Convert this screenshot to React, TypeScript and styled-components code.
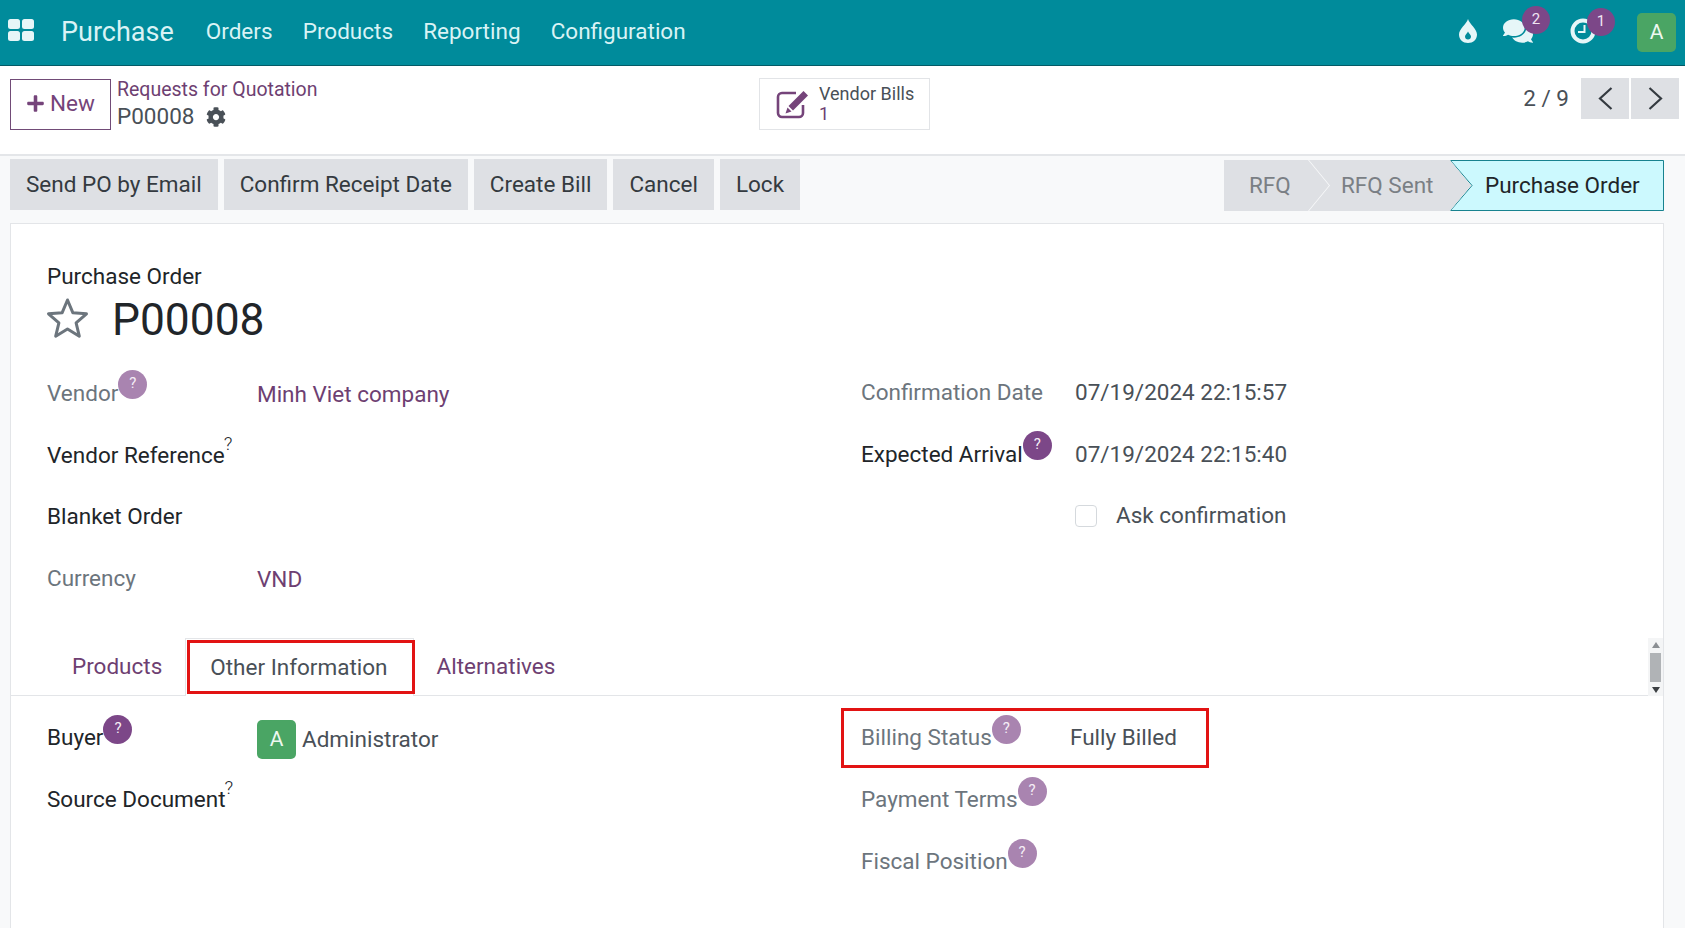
import React from 'react';
import styled, { createGlobalStyle } from 'styled-components';
import { FaCog, FaPlus, FaComments } from 'react-icons/fa';

const GlobalStyle = createGlobalStyle`
  html, body { margin: 0; padding: 0; height: 100%; overflow: hidden; }
  body {
    background: #f8f9fa;
    color: #212529;
    font-family: Roboto, "Liberation Sans", sans-serif;
    font-size: 22.5px;
    line-height: 33px;
  }
  * { box-sizing: border-box; }
`;

const Page = styled.div`
  width: 1685px;
  height: 928px;
  display: flex;
  flex-direction: column;
  overflow: hidden;
`;

const NavBar = styled.header`
  flex: none;
  height: 66px;
  display: flex;
  align-items: center;
  background: #008b9b;
  border-bottom: 1px solid #035a66;
  color: #d9f3f5;
`;

const AppsIcon = styled.svg`
  width: 26px;
  height: 22px;
  margin: 0 0 6px 8px;
`;

const Brand = styled.span`
  margin: -1px 0 0 27px;
  font-size: 27px;
`;

const MenuItems = styled.nav`
  display: flex;
  gap: 30.2px;
  margin: -2px 0 0 32px;
`;

const NavIcons = styled.div`
  margin-left: auto;
  display: flex;
  align-items: center;
  padding-right: 9px;
`;

const NavIcon = styled.span<{ $mr: number }>`
  position: relative;
  display: flex;
  margin: -3px ${({ $mr }) => $mr}px 0 0;
  color: #e6f6f8;
`;

const Counter = styled.span<{ $right: number }>`
  position: absolute;
  width: 28px;
  height: 28px;
  top: -10px;
  right: ${({ $right }) => $right}px;
  border-radius: 50%;
  background: #7c4788;
  color: #f0e4f2;
  font-size: 15px;
  line-height: 26px;
  text-align: center;
`;

const Avatar = styled.span<{ $size: number }>`
  flex: none;
  display: inline-flex;
  align-items: center;
  justify-content: center;
  width: ${({ $size }) => $size}px;
  height: ${({ $size }) => $size}px;
  border-radius: 5px;
  background: #4aa564;
  color: #eef8f0;
  font-size: 21px;
`;

const ControlPanel = styled.section`
  flex: none;
  height: 90px;
  display: grid;
  grid-template-columns: 749px 1fr auto;
  padding: 12px 6px 0 10px;
  background: #fff;
  border-bottom: 2px solid #e4e6e9;
`;

const LeftGroup = styled.div`
  display: flex;
  align-items: flex-start;
  gap: 6px;
`;

const NewButton = styled.button`
  width: 101px;
  height: 51px;
  margin-top: 1px;
  padding: 0 0 2px;
  display: flex;
  align-items: center;
  justify-content: center;
  gap: 5px;
  background: #fff;
  border: 1px solid #714b77;
  color: #75447a;
  font: inherit;
`;

const Crumbs = styled.div`
  display: flex;
  flex-direction: column;
  margin-top: -2px;
`;

const CrumbLink = styled.a`
  color: #6e3f72;
  font-size: 19.5px;
  line-height: 27px;
`;

const CrumbCurrent = styled.div`
  display: flex;
  align-items: center;
  gap: 12px;
  color: #495057;
  line-height: 27px;
`;

const StatButton = styled.button`
  width: 171px;
  height: 52px;
  display: flex;
  align-items: center;
  gap: 9px;
  padding: 0 0 0 16px;
  background: #fff;
  border: 1px solid #e2e4e7;
  font: inherit;
  text-align: left;
`;

const StatText = styled.span`
  display: flex;
  flex-direction: column;
  font-size: 18px;
  line-height: 20px;
  color: #495057;
`;

const StatValue = styled.span`
  color: #6e3f72;
`;

const Pager = styled.div`
  display: flex;
  align-items: flex-start;
  gap: 2px;
  color: #495057;
`;

const PagerCount = styled.span`
  margin-right: 10px;
  line-height: 40px;
`;

const PagerButton = styled.button`
  width: 48px;
  height: 41px;
  padding: 0;
  display: flex;
  align-items: center;
  justify-content: center;
  background: #dee0e4;
  border: 0;
  color: #343a40;
`;

const ActionBar = styled.div`
  flex: none;
  height: 67px;
  display: flex;
  align-items: flex-start;
  justify-content: space-between;
  padding: 3px 21px 0 10px;
`;

const Actions = styled.div`
  display: flex;
  gap: 6px;
`;

const ActionButton = styled.button`
  height: 51px;
  padding: 0 16px;
  background: #dee0e4;
  border: 0;
  color: #343a40;
  font: inherit;
`;

const StatusBar = styled.div`
  display: flex;
  height: 51px;
  margin-top: 1px;
`;

const Step = styled.div<{ $shape: string; $w: number; $pl: number; $overlap: number }>`
  width: ${({ $w }) => $w}px;
  padding-left: ${({ $pl }) => $pl}px;
  margin-right: -${({ $overlap }) => $overlap}px;
  background: #dee0e4;
  color: #7a7f85;
  line-height: 50px;
  clip-path: polygon(${({ $shape }) => $shape});
`;

const ActiveStep = styled.div`
  position: relative;
  width: 214px;
  padding-left: 35px;
  color: #212529;
  line-height: 50px;
`;

const ActiveShape = styled.svg`
  position: absolute;
  inset: 0;
  z-index: -1;
`;

const Sheet = styled.main`
  position: relative;
  z-index: 0;
  flex: 1;
  width: 1654px;
  margin-left: 10px;
  background: #fff;
  border: 1px solid #e3e5e8;
  border-bottom: 0;
`;

const TitleBlock = styled.div`
  padding: 36px 0 0 36px;
`;

const TitleRow = styled.div`
  display: flex;
  align-items: center;
  gap: 23px;
  height: 58px;
  margin: -2px 0 14px;
`;

const StarIcon = styled.svg`
  margin: -3px 0 0 -1px;
`;

const Title = styled.h1`
  margin: 0;
  color: #212529;
  font-size: 44.3px;
  font-weight: 400;
  line-height: 58px;
`;

const FormColumns = styled.div`
  display: grid;
  grid-template-columns: 814px 1fr;
  padding-left: 36px;
`;

const FormColumn = styled.div<{ $up?: boolean }>`
  display: flex;
  flex-direction: column;
  margin-top: ${({ $up }) => ($up ? -1 : 0)}px;
`;

const Row = styled.div<{ $labelWidth: number }>`
  position: relative;
  display: grid;
  grid-template-columns: ${({ $labelWidth }) => $labelWidth}px 1fr;
  align-items: center;
  height: 61.5px;
`;

const LabelWrap = styled.span`
  justify-self: start;
  position: relative;
`;

const Label = styled.span<{ $muted?: boolean }>`
  color: ${({ $muted }) => ($muted ? '#6c757d' : '#212529')};
`;

const Help = styled.span<{ $strong?: boolean }>`
  position: absolute;
  left: 100%;
  top: -7px;
  width: 29px;
  height: 29px;
  border-radius: 50%;
  background: ${({ $strong }) => ($strong ? '#7c4788' : '#a984b0')};
  color: #f5eef6;
  font-size: 15px;
  line-height: 27px;
  text-align: center;
`;

const HelpMark = styled.sup`
  position: absolute;
  left: 100%;
  top: -5px;
  margin-left: -1px;
  font-size: 19px;
  font-weight: 300;
  line-height: 20px;
`;

const LinkValue = styled.a`
  color: #6e3f72;
  padding-top: 2px;
`;

const Value = styled.span<{ $shift?: number }>`
  color: #495057;
  margin-left: ${({ $shift }) => $shift ?? 0}px;
`;

const Highlight = styled.span`
  position: absolute;
  border: 3px solid #e21313;
  pointer-events: none;
`;

const BillingHighlight = styled(Highlight)`
  left: -20px;
  top: 2px;
  width: 368px;
  height: 60px;
`;

const TabHighlight = styled(Highlight)`
  left: 1px;
  right: -2px;
  top: 1px;
  height: 54px;
`;

const CheckLine = styled.div`
  display: flex;
  align-items: center;
  gap: 19px;
  color: #495057;
`;

const Checkbox = styled.span`
  width: 22px;
  height: 22px;
  border: 1px solid #d5d9dd;
  border-radius: 4px;
`;

const TabStrip = styled.div`
  position: relative;
  display: flex;
  height: 58px;
  margin-top: 29px;
  padding-left: 38px;
  border-bottom: 1px solid #e3e5e8;
`;

const Tab = styled.a<{ $active?: boolean }>`
  position: relative;
  height: 58px;
  padding: 0 ${({ $active }) => ($active ? '25px 0 24px' : '23px')};
  color: ${({ $active }) => ($active ? '#495057' : '#6e3f72')};
  line-height: 57px;
  ${({ $active }) => $active && 'background: #fff; border: 1px solid #e3e5e8; border-bottom: 0;'}
`;

const ScrollBar = styled.div`
  position: absolute;
  right: 0;
  top: 0;
  width: 15px;
  height: 58px;
  display: flex;
  flex-direction: column;
  align-items: center;
  justify-content: space-between;
  padding: 4px 0 3px;
  background: #f4f5f6;
`;

const ScrollArrow = styled.svg`
  width: 8px;
  height: 6px;
`;

const ScrollThumb = styled.div`
  width: 11px;
  height: 29px;
  background: #b0b3b6;
`;

const TabBody = styled(FormColumns)`
  padding-top: 10px;

  ${Row} {
    height: 62.3px;
  }

  ${Help} {
    top: -6px;
  }
`;

const UserLine = styled.div`
  display: flex;
  align-items: center;
  gap: 6px;
  margin-top: 5px;
  color: #495057;
`;

function Chevron({ left }: { left?: boolean }) {
  return (
    <svg width="15" height="23" viewBox="0 0 15 23" fill="none" stroke="currentColor" strokeWidth="2.2">
      <polyline points={left ? '13.5,1 2,11.5 13.5,22' : '1.5,1 13,11.5 1.5,22'} />
    </svg>
  );
}

export default function App() {
  return (
    <Page>
      <GlobalStyle />
      <NavBar>
        <AppsIcon viewBox="0 0 26 22" fill="#e6f6f8">
          <rect x="0" y="0" width="12" height="10" rx="2.5" />
          <rect x="14" y="0" width="12" height="10" rx="2.5" />
          <rect x="0" y="12" width="12" height="10" rx="2.5" />
          <rect x="14" y="12" width="12" height="10" rx="2.5" />
        </AppsIcon>
        <Brand>Purchase</Brand>
        <MenuItems>
          <span>Orders</span>
          <span>Products</span>
          <span>Reporting</span>
          <span>Configuration</span>
        </MenuItems>
        <NavIcons>
          <NavIcon $mr={26}>
            <svg width="18" height="24" viewBox="0 0 18 24">
              <path fill="#e6f6f8" d="M9 0C10.500 5 18 10 18 15.500C18 20.500 14 24 9 24C4 24 0 20.500 0 15.500C0 10 7.500 5 9 0Z" />
              <path fill="#008b9b" d="M9 12.500C9.600 14.500 12 15.500 12 17.500C12 19.200 10.700 20.500 9 20.500C7.300 20.500 6 19.200 6 17.500C6 15.500 8.400 14.500 9 12.500Z" />
            </svg>
          </NavIcon>
          <NavIcon $mr={37}>
            <FaComments size={30} />
            <Counter $right={-17}>2</Counter>
          </NavIcon>
          <NavIcon $mr={41}>
            <svg width="26" height="26" viewBox="0 0 26 26" fill="none" stroke="currentColor">
              <circle cx="13" cy="13" r="10.5" strokeWidth="4" />
              <path d="M14.500 7V14H8" strokeWidth="2" />
            </svg>
            <Counter $right={-19}>1</Counter>
          </NavIcon>
          <Avatar $size={39}>A</Avatar>
        </NavIcons>
      </NavBar>

      <ControlPanel>
        <LeftGroup>
          <NewButton>
            <FaPlus size={19} />
            New
          </NewButton>
          <Crumbs>
            <CrumbLink>Requests for Quotation</CrumbLink>
            <CrumbCurrent>
              P00008
              <FaCog size={20} />
            </CrumbCurrent>
          </Crumbs>
        </LeftGroup>
        <div>
          <StatButton>
            <svg width="34" height="32" viewBox="0 0 34 32" fill="#75447a">
              <path
                d="M27 17V25A4 4 0 0 1 23 29H6A4 4 0 0 1 2 25V9A4 4 0 0 1 6 5H20"
                fill="none"
                stroke="#75447a"
                strokeWidth="2.6"
              />
              <path d="M27.500 3L32 7.500L17 22.500L12.500 18Z" />
              <path d="M11.500 19.500L15.500 23.500L9.500 25.500Z" />
            </svg>
            <StatText>
              Vendor Bills
              <StatValue>1</StatValue>
            </StatText>
          </StatButton>
        </div>
        <Pager>
          <PagerCount>2 / 9</PagerCount>
          <PagerButton>
            <Chevron left />
          </PagerButton>
          <PagerButton>
            <Chevron />
          </PagerButton>
        </Pager>
      </ControlPanel>

      <ActionBar>
        <Actions>
          <ActionButton>Send PO by Email</ActionButton>
          <ActionButton>Confirm Receipt Date</ActionButton>
          <ActionButton>Create Bill</ActionButton>
          <ActionButton>Cancel</ActionButton>
          <ActionButton>Lock</ActionButton>
        </Actions>
        <StatusBar>
          <Step $w={105} $pl={25} $overlap={20} $shape="0 0, 84px 0, 100% 50%, 84px 100%, 0 100%">RFQ</Step>
          <Step $w={162} $pl={32} $overlap={21} $shape="0 0, 141px 0, 100% 50%, 141px 100%, 0 100%, 21px 50%">RFQ Sent</Step>
          <ActiveStep>
            <ActiveShape width="214" height="51" viewBox="0 0 214 51">
              <polygon points="0.5,0.5 213.500,0.5 213.500,50.500 0.5,50.500 22,25.500" fill="#ccf9fe" stroke="#17828f" />
            </ActiveShape>
            Purchase Order
          </ActiveStep>
        </StatusBar>
      </ActionBar>

      <Sheet>
        <TitleBlock>
          <Label>Purchase Order</Label>
          <TitleRow>
            <StarIcon width="43" height="41" viewBox="-1 -1 43 41" fill="none" stroke="#6c757d" strokeWidth="3" strokeLinejoin="round">
              <polygon points="20.5,1 25.800,13.700 39.500,14.800 29.100,23.800 32.300,37.200 20.500,30 8.700,37.200 11.900,23.800 1.500,14.800 15.200,13.700" />
            </StarIcon>
            <Title>P00008</Title>
          </TitleRow>
        </TitleBlock>

        <FormColumns>
          <FormColumn>
            <Row $labelWidth={210}>
              <LabelWrap>
                <Label $muted>Vendor</Label>
                <Help>?</Help>
              </LabelWrap>
              <LinkValue>Minh Viet company</LinkValue>
            </Row>
            <Row $labelWidth={210}>
              <LabelWrap>
                <Label>Vendor Reference</Label>
                <HelpMark>?</HelpMark>
              </LabelWrap>
            </Row>
            <Row $labelWidth={210}>
              <Label>Blanket Order</Label>
            </Row>
            <Row $labelWidth={210}>
              <Label $muted>Currency</Label>
              <LinkValue>VND</LinkValue>
            </Row>
          </FormColumn>
          <FormColumn $up>
            <Row $labelWidth={214}>
              <Label $muted>Confirmation Date</Label>
              <Value>07/19/2024 22:15:57</Value>
            </Row>
            <Row $labelWidth={214}>
              <LabelWrap>
                <Label>Expected Arrival</Label>
                <Help $strong>?</Help>
              </LabelWrap>
              <Value>07/19/2024 22:15:40</Value>
            </Row>
            <Row $labelWidth={214}>
              <span />
              <CheckLine>
                <Checkbox />
                Ask confirmation
              </CheckLine>
            </Row>
          </FormColumn>
        </FormColumns>

        <TabStrip>
          <Tab>Products</Tab>
          <Tab $active>
            Other Information
            <TabHighlight />
          </Tab>
          <Tab>Alternatives</Tab>
          <ScrollBar>
            <ScrollArrow viewBox="0 0 8 6" fill="#8b8f93">
              <polygon points="4,0 8,6 0,6" />
            </ScrollArrow>
            <ScrollThumb />
            <ScrollArrow viewBox="0 0 8 6" fill="#3c4043">
              <polygon points="0,0 8,0 4,6" />
            </ScrollArrow>
          </ScrollBar>
        </TabStrip>

        <TabBody>
          <FormColumn>
            <Row $labelWidth={210}>
              <LabelWrap>
                <Label>Buyer</Label>
                <Help $strong>?</Help>
              </LabelWrap>
              <UserLine>
                <Avatar $size={39}>A</Avatar>
                Administrator
              </UserLine>
            </Row>
            <Row $labelWidth={210}>
              <LabelWrap>
                <Label>Source Document</Label>
                <HelpMark>?</HelpMark>
              </LabelWrap>
            </Row>
          </FormColumn>
          <FormColumn>
            <Row $labelWidth={214}>
              <LabelWrap>
                <Label $muted>Billing Status</Label>
                <Help>?</Help>
              </LabelWrap>
              <Value $shift={-5}>Fully Billed</Value>
              <BillingHighlight />
            </Row>
            <Row $labelWidth={214}>
              <LabelWrap>
                <Label $muted>Payment Terms</Label>
                <Help>?</Help>
              </LabelWrap>
            </Row>
            <Row $labelWidth={214}>
              <LabelWrap>
                <Label $muted>Fiscal Position</Label>
                <Help>?</Help>
              </LabelWrap>
            </Row>
          </FormColumn>
        </TabBody>
      </Sheet>
    </Page>
  );
}
